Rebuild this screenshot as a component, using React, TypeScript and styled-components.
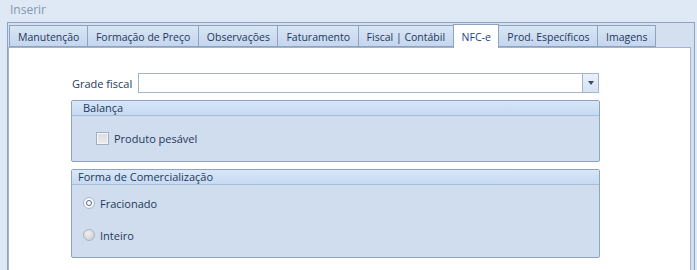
import styled, { createGlobalStyle } from 'styled-components';

const GlobalStyle = createGlobalStyle`
  body {
    margin: 0;
    background: #dfe9f5;
    font-family: "Open Sans", "Noto Sans", sans-serif;
    font-size: 11px;
    color: #1e395b;
  }
`;

const Screen = styled.div`
  width: 697px;
  height: 270px;
  overflow: hidden;
  background: #dfe9f5;
`;

const Title = styled.div`
  height: 22px;
  line-height: 20px;
  padding-left: 10px;
  font-size: 12px;
  color: #8296b2;
`;

const Frame = styled.div`
  margin-left: 7px;
  width: 683px;
  height: 260px;
  border: 1px solid #8ea3c0;
  border-bottom: none;
  background: #d4e0f0;
  padding-right: 3px;
`;

const TabStrip = styled.div`
  display: flex;
  align-items: flex-end;
  height: 24px;
  padding-left: 1px;
  position: relative;
  z-index: 1;
`;

const Tab = styled.div<{ active?: boolean }>`
  height: ${({ active }) => (active ? '24px' : '22px')};
  margin-bottom: ${({ active }) => (active ? '-1px' : '0')};
  padding: 0 7.5px 0 8px;
  display: flex;
  align-items: center;
  box-sizing: border-box;
  border: 1px solid #8ea3c0;
  border-bottom: ${({ active }) => (active ? 'none' : '1px solid #8ea3c0')};
  margin-right: -1px;
  white-space: nowrap;
  font-size: 10.5px;
  background: ${({ active }) =>
    active ? '#ffffff' : 'linear-gradient(#d9e5f4, #c4d6ee)'};
  color: ${({ active }) => (active ? '#15428b' : '#1e395b')};
  padding-top: ${({ active }) => (active ? '0' : '1px')};
`;

const Page = styled.div`
  background: #ffffff;
  border: 1px solid #a3b4cb;
  border-bottom: none;
  height: 240px;
  padding: 26px 0 0 62px;
`;

const Column = styled.div`
  width: 528px;
  display: flex;
  flex-direction: column;
`;

const FieldRow = styled.div`
  display: flex;
  align-items: center;
  height: 18px;
`;

const Label = styled.span`
  width: 67px;
  padding-left: 1px;
  box-sizing: border-box;
`;

const Combo = styled.div`
  flex: 1;
  display: flex;
  height: 18px;
  border: 1px solid #a3b4cb;
  background: #ffffff;
`;

const ComboInput = styled.div`
  flex: 1;
`;

const ComboButton = styled.div`
  width: 15px;
  border-left: 1px solid #a3b4cb;
  background: linear-gradient(#eaf1fa, #d6e3f3);
  display: flex;
  align-items: center;
  justify-content: center;
`;

const Arrow = styled.div`
  width: 0;
  height: 0;
  border-left: 3.5px solid transparent;
  border-right: 3.5px solid transparent;
  border-top: 4px solid #3c4a5c;
`;

const Group = styled.div<{ bodyHeight: number; gap: number }>`
  margin-top: ${({ gap }) => gap}px;
  border: 1px solid #8ea3c0;
  border-radius: 2px;
  background: #d0ddee;
  width: 527px;
  height: ${({ bodyHeight }) => bodyHeight + 15}px;
`;

const GroupHeader = styled.div<{ indent: number }>`
  height: 15px;
  line-height: 14px;
  padding-left: ${({ indent }) => indent}px;
  border-bottom: 1px solid #a9bcd6;
  box-sizing: border-box;
  background: linear-gradient(#d8e6f8, #c6daf3);
`;

const GroupBody = styled.div<{ pad: string }>`
  padding: ${({ pad }) => pad};
  display: flex;
  flex-direction: column;
`;

const Option = styled.label<{ spacing?: number }>`
  display: flex;
  align-items: center;
  gap: 5px;
  height: 14px;
  margin-bottom: ${({ spacing }) => spacing ?? 0}px;
`;

const Box = styled.span`
  width: 11px;
  height: 11px;
  border: 1px solid #a0aec2;
  box-shadow: inset 0 0 0 1px #f4f6f8;
  background: linear-gradient(#dcdcdc, #ececec);
`;

const Radio = styled.span<{ checked?: boolean }>`
  width: 10px;
  height: 10px;
  border-radius: 50%;
  border: 1px solid #aab4c2;
  background: ${({ checked }) =>
    checked ? '#f4f7fb' : 'radial-gradient(circle at 40% 35%, #f0f0f0, #c8c8c8)'};
  display: flex;
  align-items: center;
  justify-content: center;
`;

const RadioDot = styled.span`
  width: 4px;
  height: 4px;
  border-radius: 50%;
  border: 1px solid #506a8c;
  background: #ffffff;
`;

const tabs = [
  'Manutenção',
  'Formação de Preço',
  'Observações',
  'Faturamento',
  'Fiscal | Contábil',
  'NFC-e',
  'Prod. Específicos',
  'Imagens',
];

export default function App() {
  return (
    <Screen>
      <GlobalStyle />
      <Title>Inserir</Title>
      <Frame>
        <TabStrip>
          {tabs.map((t) => (
            <Tab key={t} active={t === 'NFC-e'}>
              {t}
            </Tab>
          ))}
        </TabStrip>
        <Page>
          <Column>
            <FieldRow>
              <Label>Grade fiscal</Label>
              <Combo>
                <ComboInput />
                <ComboButton>
                  <Arrow />
                </ComboButton>
              </Combo>
            </FieldRow>
            <Group bodyHeight={45} gap={8}>
              <GroupHeader indent={11}>Balança</GroupHeader>
              <GroupBody pad="15px 0 0 24px">
                <Option>
                  <Box />
                  Produto pesável
                </Option>
              </GroupBody>
            </Group>
            <Group bodyHeight={72} gap={7}>
              <GroupHeader indent={6}>Forma de Comercialização</GroupHeader>
              <GroupBody pad="11px 0 0 11px">
                <Option spacing={18}>
                  <Radio checked>
                    <RadioDot />
                  </Radio>
                  Fracionado
                </Option>
                <Option>
                  <Radio />
                  Inteiro
                </Option>
              </GroupBody>
            </Group>
          </Column>
        </Page>
      </Frame>
    </Screen>
  );
}
